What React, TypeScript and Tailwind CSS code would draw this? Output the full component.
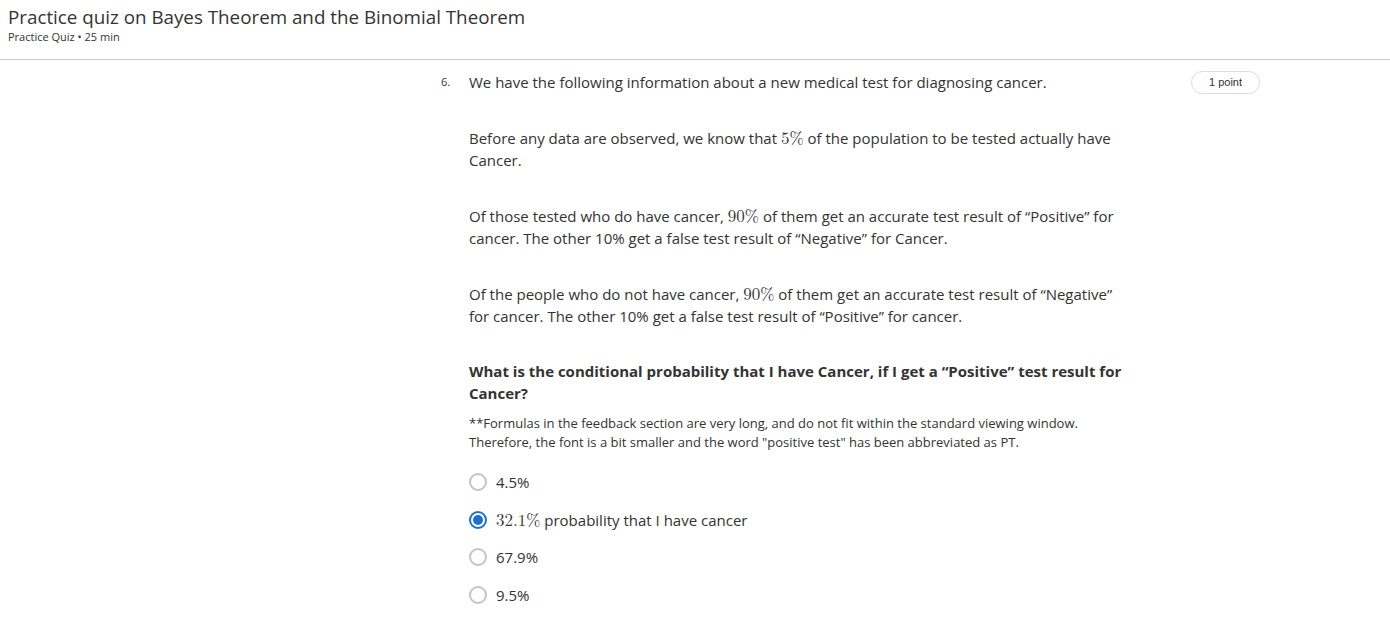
import React from "react";

const M = ({ children }: { children: React.ReactNode }) => (
  <span className="text-[17px] leading-none" style={{ fontFamily: '"Latin Modern Math", "DejaVu Serif", "Liberation Serif", serif' }}>
    {children}
  </span>
);

function Radio({ checked }: { checked?: boolean }) {
  return checked ? (
    <span className="w-[18px] h-[18px] rounded-full border-2 border-[#1f6fd1] flex items-center justify-center shrink-0">
      <span className="w-[10px] h-[10px] rounded-full bg-[#1f6fd1]" />
    </span>
  ) : (
    <span className="w-[18px] h-[18px] rounded-full border-2 border-[#c4c4c4] shrink-0" />
  );
}

export default function App() {
  const options: { label: React.ReactNode; checked?: boolean }[] = [
    { label: "4.5%" },
    {
      label: (
        <>
          <M>32.1%</M> probability that I have cancer
        </>
      ),
      checked: true,
    },
    { label: "67.9%" },
    { label: "9.5%" },
  ];
  return (
    <div className="w-[1390px] h-[641px] bg-white text-[#333] overflow-hidden" style={{ fontFamily: '"Open Sans", sans-serif' }}>
      <header className="h-[60px] border-b border-[#c8c8c8] px-[8px] pt-[4px]">
        <h1 className="text-[18.8px] leading-[26px] text-[#333]">Practice quiz on Bayes Theorem and the Binomial Theorem</h1>
        <div className="text-[11px] leading-[14px] text-[#333]">Practice Quiz • 25 min</div>
      </header>
      <main className="flex pt-[11px]">
        <div className="w-[441px] shrink-0" />
        <div className="w-[28px] shrink-0 text-[11px] leading-[22px] text-[#333]">6.</div>
        <div className="w-[660px] shrink-0 text-[15px] leading-[22px] text-[#333]">
          <p className="mb-[34px]">We have the following information about a new medical test for diagnosing cancer.</p>
          <p className="mb-[34px]">
            Before any data are observed, we know that <M>5%</M> of the population to be tested actually have Cancer.
          </p>
          <p className="mb-[34px]">
            Of those tested who do have cancer, <M>90%</M> of them get an accurate test result of “Positive” for cancer. The other 10% get a false test result of “Negative” for Cancer.
          </p>
          <p className="mb-[33px]">
            Of the people who do not have cancer, <M>90%</M> of them get an accurate test result of “Negative” for cancer. The other 10% get a false test result of “Positive” for cancer.
          </p>
          <p className="font-bold mb-[10px]">What is the conditional probability that I have Cancer, if I get a “Positive” test result for Cancer?</p>
          <p className="text-[13px] leading-[19px] mb-[19px]">
            **Formulas in the feedback section are very long, and do not fit within the standard viewing window. Therefore, the font is a bit smaller and the word "positive test" has been abbreviated as PT.
          </p>
          <div className="flex flex-col gap-[15.6px]">
            {options.map((o, i) => (
              <label key={i} className="flex items-center gap-[9px] h-[22px] text-[15px]">
                <Radio checked={o.checked} />
                <span>{o.label}</span>
              </label>
            ))}
          </div>
        </div>
        <div className="ml-[62px]">
          <div className="w-[69px] h-[23px] rounded-full border border-[#dcdcdc] flex items-center justify-center text-[11px] text-[#333]" style={{ fontFamily: '"Liberation Sans", Arial, sans-serif' }}>
            1 point
          </div>
        </div>
      </main>
    </div>
  );
}
